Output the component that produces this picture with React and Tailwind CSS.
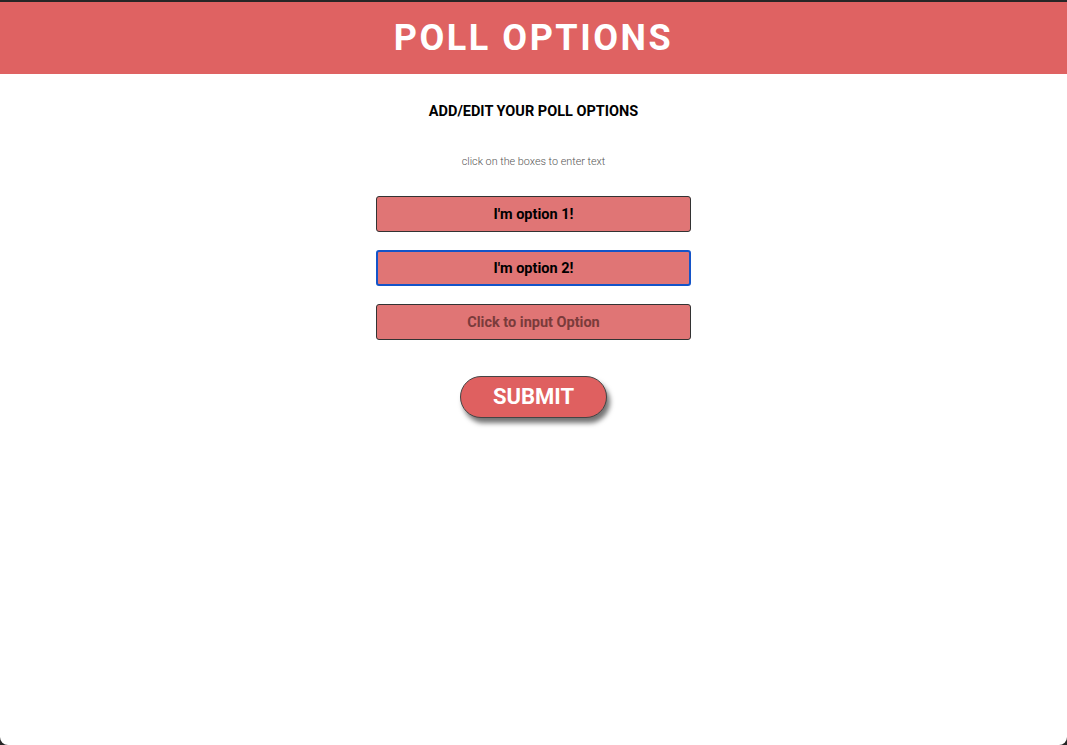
import React from "react";

export default function App() {
  const font = { fontFamily: "Roboto, 'Liberation Sans', sans-serif" };
  return (
    <div className="h-[745px] w-full bg-[#262626] pt-[2px]" style={font}>
      <div className="flex h-full flex-col overflow-hidden rounded-b-[8px] bg-white">
        <header className="flex h-[72px] items-center justify-center bg-[#df6262]">
          <h1 className="text-[36px] font-bold leading-none tracking-[0.07em] text-white">POLL OPTIONS</h1>
        </header>
        <main className="flex flex-col items-center">
          <h2 className="mt-[29px] text-[14.5px] font-bold leading-[17px] text-black">ADD/EDIT YOUR POLL OPTIONS</h2>
          <p className="mt-[35px] text-[10.8px] font-light leading-[13px] text-[#555]">click on the boxes to enter text</p>
          <div className="mt-[28px] flex flex-col gap-[18px]">
            <input
              readOnly
              value="I'm option 1!"
              className="h-[36px] w-[315px] rounded-[3px] border border-[#333] bg-[#e07575] text-center text-[14.5px] font-bold text-black outline-none"
            />
            <input
              readOnly
              value="I'm option 2!"
              className="h-[36px] w-[315px] rounded-[3px] border-2 border-[#1454c8] bg-[#e07575] text-center text-[14.5px] font-bold text-black outline-none"
            />
            <input
              readOnly
              placeholder="Click to input Option"
              className="h-[36px] w-[315px] rounded-[3px] border border-[#333] bg-[#e07575] text-center text-[14.5px] font-bold text-black outline-none placeholder:text-[#7a3b3b]"
            />
          </div>
          <button className="mt-[36px] h-[42px] w-[147px] rounded-full border border-[#444] bg-[#df6060] text-[22px] font-bold leading-none text-white shadow-[3px_5px_5px_rgba(0,0,0,0.55)]">
            SUBMIT
          </button>
        </main>
      </div>
    </div>
  );
}
